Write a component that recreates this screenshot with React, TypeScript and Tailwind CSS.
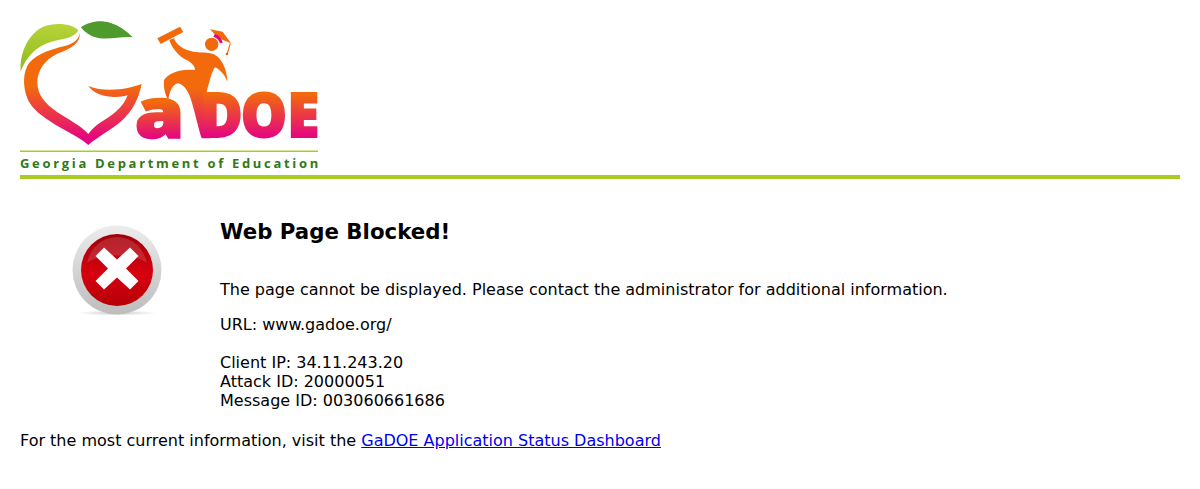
const sans = { fontFamily: '"DejaVu Sans", sans-serif' };
const logoFont = { fontFamily: '"Open Sans", sans-serif' };

function Logo() {
  return (
    <svg width="300" height="155" viewBox="20 20 300 155" className="block">
      <defs>
        <linearGradient id="peach" gradientUnits="userSpaceOnUse" x1="0" y1="230" x2="0" y2="385">
          <stop offset="0" stopColor="#f26a0c" />
          <stop offset="1" stopColor="#e4067f" />
        </linearGradient>
        <linearGradient id="figure" gradientUnits="userSpaceOnUse" x1="0" y1="235" x2="0" y2="385">
          <stop offset="0" stopColor="#f26a0c" />
          <stop offset="1" stopColor="#e4067f" />
        </linearGradient>
        <linearGradient id="letters" gradientUnits="userSpaceOnUse" x1="0" y1="-36" x2="0" y2="0">
          <stop offset="0" stopColor="#f26a0c" />
          <stop offset="1" stopColor="#e4067f" />
        </linearGradient>
        <linearGradient id="leaf" x1="0" y1="0" x2="0" y2="1">
          <stop offset="0" stopColor="#b7d43a" />
          <stop offset="1" stopColor="#8fb81c" />
        </linearGradient>
      </defs>

      {/* peach + G, traced at 3x */}
      <g transform="translate(0 10) scale(0.3333)">
        <path d="M62 185C58 130 85 70 130 50C165 36 215 40 235 60C228 78 205 85 175 90C125 100 85 125 62 185Z" fill="url(#leaf)" />
        <path d="M243 52C265 35 300 28 330 38C358 47 380 62 398 82C370 78 330 90 295 84C272 80 255 68 243 52Z" fill="#4e9a2c" />
        <path
          d="M240 68C236 88 222 100 195 108C160 116 112 130 88 158C68 185 68 228 82 265C98 305 150 335 190 358C220 375 245 388 265 405C285 385 330 362 362 335C397 305 417 265 425 222C390 235 320 250 265 228C285 258 340 268 383 256C370 292 335 318 300 338C285 348 275 358 265 372C240 345 205 328 170 305C135 280 112 255 112 215C114 178 135 150 170 132C205 118 240 105 240 68Z"
          fill="url(#peach)"
        />
      </g>

      {/* figure with diploma and cap, traced at 3x */}
      <g transform="translate(150 10) scale(0.3333)">
        <path d="M22 85L90 50L100 66L32 102Z" fill="#f2690b" />
        <path
          d="M58 90L72 85C80 105 100 120 130 125C150 128 175 126 190 132C215 142 232 180 232 215C225 195 212 180 195 172C185 185 180 210 170 245L182 250L182 385L155 385C148 365 138 320 125 275C118 250 105 225 85 220C68 222 58 245 55 270C46 255 40 235 42 210C55 190 90 175 135 180C135 165 120 155 100 145C80 130 65 112 58 90Z"
          fill="url(#figure)"
        />
        <circle cx="185" cy="103" r="20" fill="#f2690b" />
        <path d="M180 58L218 65L243 100L205 85Z" fill="#f2690b" />
        <path d="M195 72C208 76 215 85 218 98L210 100C207 90 200 83 190 80Z" fill="#e4067f" />
        <path d="M241 100L232 130" stroke="#f2690b" strokeWidth="3.5" />
        <circle cx="231" cy="132" r="4" fill="#f2690b" />
      </g>

      <g transform="translate(0 138) scale(1.15 1)">
        <text x="117" y="0" fill="url(#letters)" stroke="url(#letters)" strokeWidth="1.6" fontSize="70" fontWeight="800" style={logoFont}>
          a
        </text>
      </g>
      <g transform="translate(0 137) scale(1.12 1.2)">
        <text
          x="178.5 215 256.5"
          y="0"
          fill="url(#letters)"
          stroke="url(#letters)"
          strokeWidth="1.6"
          fontSize="52"
          fontWeight="800"
          style={logoFont}
        >
          DOE
        </text>
      </g>

      <rect x="20" y="150.5" width="298" height="1.5" fill="#a9cb22" />
      <text x="20" y="168" fill="#2f7a16" fontSize="13" fontWeight="700" letterSpacing="2.68" style={logoFont}>
        Georgia Department of Education
      </text>
    </svg>
  );
}

function BlockedIcon() {
  return (
    <svg width="100" height="100" viewBox="0 0 100 100" className="block">
      <defs>
        <linearGradient id="ring" x1="0" y1="0" x2="0" y2="1">
          <stop offset="0" stopColor="#ececec" />
          <stop offset="1" stopColor="#bdbdbd" />
        </linearGradient>
        <linearGradient id="red" x1="0" y1="0" x2="0" y2="1">
          <stop offset="0" stopColor="#a0000a" />
          <stop offset="0.55" stopColor="#d8000f" />
          <stop offset="1" stopColor="#b50008" />
        </linearGradient>
        <radialGradient id="shadow">
          <stop offset="0" stopColor="#c8c8c8" />
          <stop offset="1" stopColor="#ffffff" />
        </radialGradient>
      </defs>
      <ellipse cx="50" cy="90" rx="40" ry="2.5" fill="url(#shadow)" />
      <circle cx="50" cy="47" r="44.5" fill="url(#ring)" />
      <circle cx="50" cy="47" r="36" fill="url(#red)" />
      <path d="M20 40C24 22 38 14 50 14C62 14 76 22 80 40C68 30 32 30 20 40Z" fill="#ffffff" fillOpacity="0.14" />
      <path d="M50 36.5L63 24.5L71.5 33L59 45.5L71.5 58L63 66.5L50 54.5L37 66.5L28.5 58L41 45.5L28.5 33L37 24.5Z" fill="#ffffff" />
    </svg>
  );
}

export default function App() {
  return (
    <div className="bg-white text-black text-[16px] px-5 pt-5" style={sans}>
      <div className="border-b-[4px] border-[#a9cb22]">
        <Logo />
      </div>

      <div className="flex mt-[37px]">
        <div className="w-[200px] shrink-0 pl-[47px] pt-[7px]">
          <BlockedIcon />
        </div>
        <div>
          <h1 className="text-[21.3px] font-bold leading-[26px] mt-[3px]">Web Page Blocked!</h1>
          <p className="mt-[35px] leading-[19px]">
            The page cannot be displayed. Please contact the administrator for additional information.
          </p>
          <p className="mt-[16px] leading-[19px]">URL: www.gadoe.org/</p>
          <p className="mt-[19px] leading-[19px]">
            Client IP: 34.11.243.20
            <br />
            Attack ID: 20000051
            <br />
            Message ID: 003060661686
          </p>
        </div>
      </div>

      <p className="mt-[21px] leading-[19px]">
        For the most current information, visit the{" "}
        <a href="#" className="text-[#0000ee] underline">
          GaDOE Application Status Dashboard
        </a>
      </p>
    </div>
  );
}
